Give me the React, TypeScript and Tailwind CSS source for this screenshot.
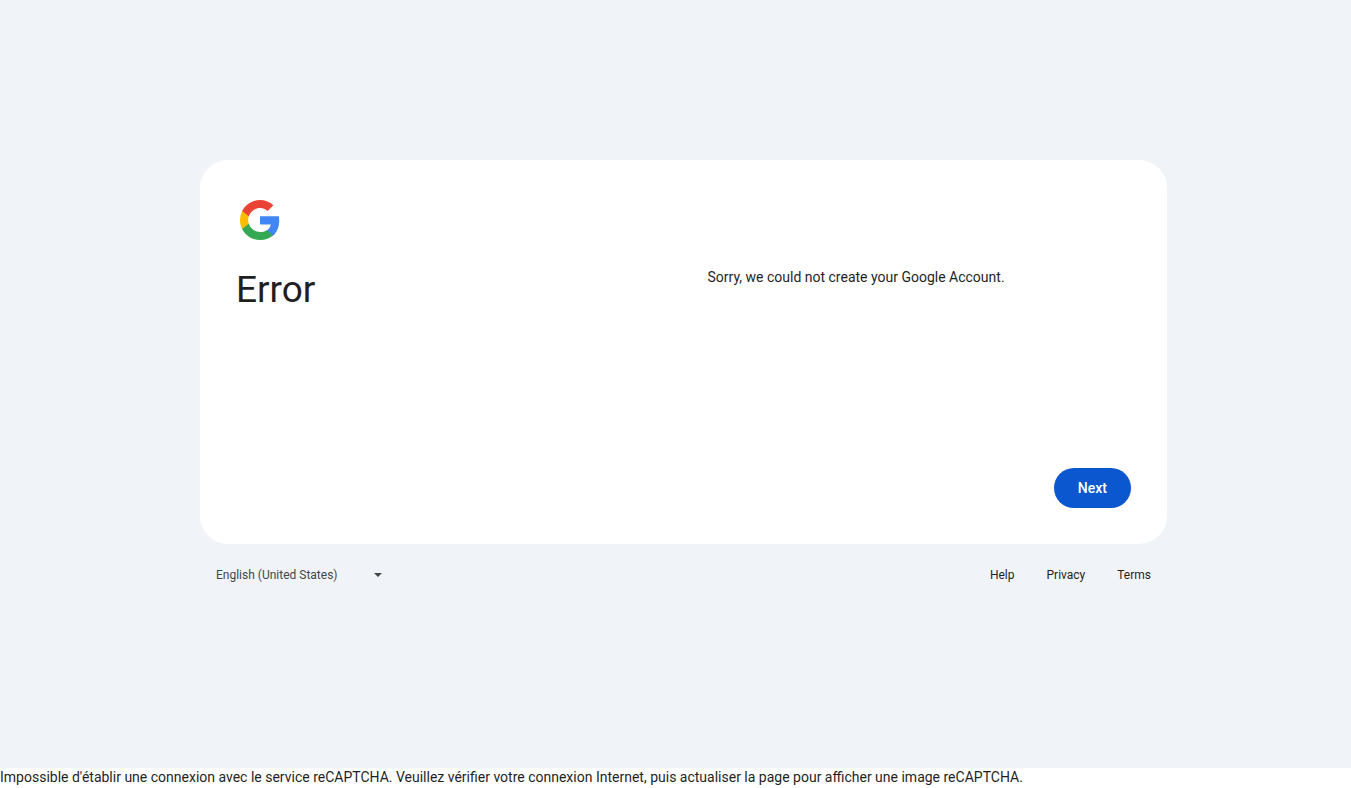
export default function App() {
  return (
    <div className="flex min-h-screen flex-col bg-white font-['Roboto',sans-serif] text-sm text-[#1f1f1f]">
      <div className="flex flex-1 flex-col items-center bg-[#f0f4f9] pt-40 pb-8 pl-4">
        <div className="w-full max-w-[967px]">
          <main className="grid min-h-96 grid-cols-2 grid-rows-[1fr_auto] rounded-[28px] bg-white p-9">
            <section>
              <svg className="block size-12" viewBox="0 0 48 48" aria-hidden="true">
                <path fill="#4285F4" d="M43.2 24.45c0-1.42-.13-2.77-.36-4.09H24v8.08h10.79c-.49 2.47-1.9 4.57-4.02 5.99v5.04h6.49c3.8-3.5 5.94-8.64 5.94-15.02z" />
                <path fill="#34A853" d="M24 44c5.4 0 9.93-1.79 13.24-4.85l-6.47-5.02C28.98 35.33 26.69 36.04 24 36.04c-5.21 0-9.63-3.52-11.21-8.25H6.12v5.18C9.41 39.51 16.17 44 24 44z" />
                <path fill="#FBBC04" d="M12.79 27.79A12 12 0 0 1 12.16 24c0-1.32.23-2.6.63-3.79v-5.18H6.12A20 20 0 0 0 4 24c0 3.23.77 6.28 2.12 8.97z" />
                <path fill="#EA4335" d="M24 11.96c2.94 0 5.57 1.01 7.64 2.99l5.74-5.74C33.91 5.98 29.39 4 24 4 16.17 4 9.41 8.49 6.12 15.03l6.67 5.18C14.37 15.48 18.79 11.96 24 11.96z" />
              </svg>
              <h1 className="pt-6 text-[37px] leading-[44px]">Error</h1>
            </section>
            <p className="pt-[72px] pl-6 leading-[18px]">Sorry, we could not create your Google Account.</p>
            <div className="col-span-2 flex justify-end">
              <button type="button" className="h-10 rounded-full bg-[#0b57d0] px-6 font-medium text-white">Next</button>
            </div>
          </main>
          <footer className="flex items-center justify-between px-4 pt-4 text-xs">
            <div className="grid items-center">
              <select aria-label="Language" className="col-start-1 row-start-1 h-[30px] w-44 appearance-none bg-transparent text-[#444746]">
                <option>English (United States)</option>
              </select>
              <svg className="pointer-events-none col-start-1 row-start-1 mr-2 size-3 justify-self-end" viewBox="0 0 12 12" aria-hidden="true">
                <path fill="#444746" d="M2 4h8L6 8z" />
              </svg>
            </div>
            <nav className="flex gap-8">
              <a href="#help">Help</a>
              <a href="#privacy">Privacy</a>
              <a href="#terms">Terms</a>
            </nav>
          </footer>
        </div>
      </div>
      <p className="pb-0.5 leading-[18px]">Impossible d'établir une connexion avec le service reCAPTCHA. Veuillez vérifier votre connexion Internet, puis actualiser la page pour afficher une image reCAPTCHA.</p>
    </div>
  );
}
